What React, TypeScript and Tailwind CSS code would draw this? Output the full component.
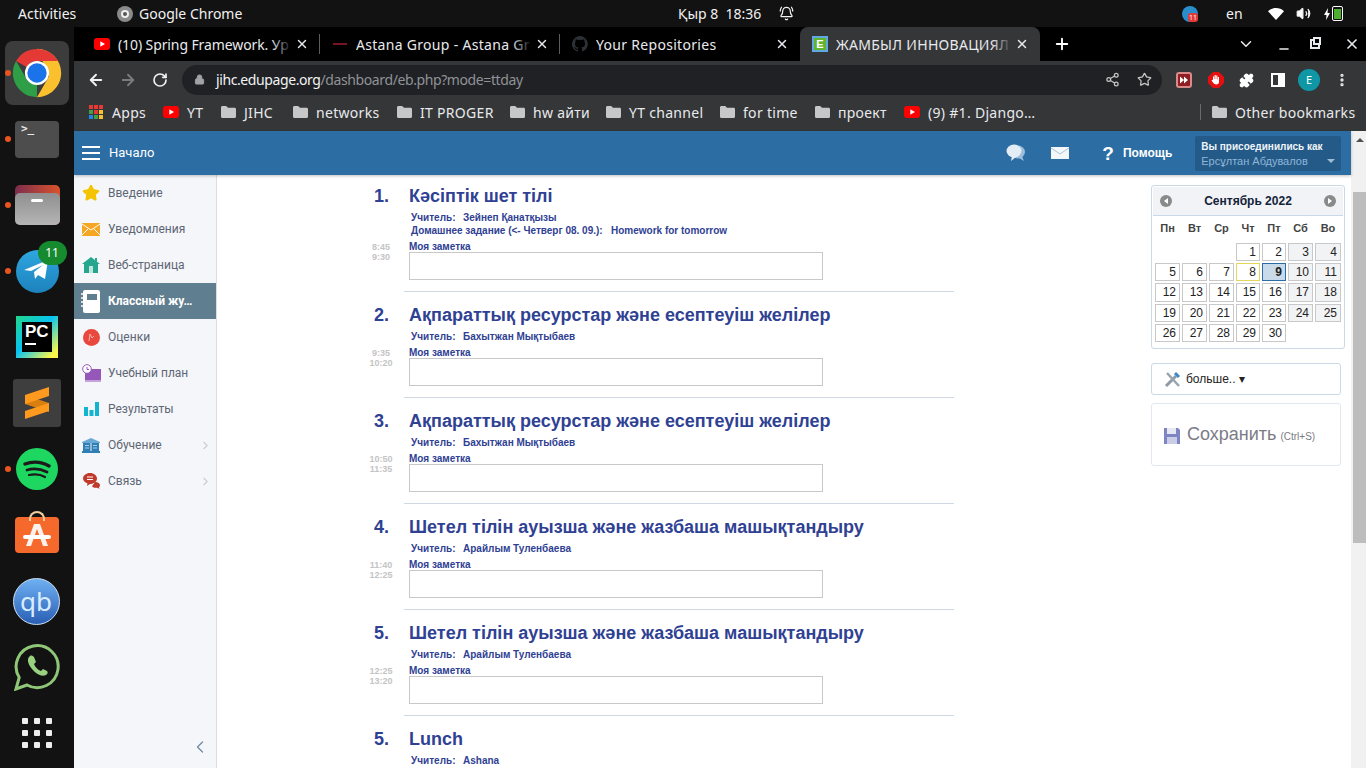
import type { ReactNode } from 'react';
import { ArrowLeft, ArrowRight, ChevronDown, ChevronLeft, ChevronRight, Lock, Plus, RotateCw, Share2, Star, X, Puzzle, MoreVertical, BellRing, Volume2, Minus } from 'lucide-react';

const uiFont = "font-['Noto_Sans',sans-serif]";

type Lesson = { num: string; title: string; teacher: string; start: string; end: string; homework?: boolean; noNote?: boolean };

const lessons: Lesson[] = [
  { num: '1.', title: 'Кәсіптік шет тілі', teacher: 'Зейнеп Қанатқызы', start: '8:45', end: '9:30', homework: true },
  { num: '2.', title: 'Ақпараттық ресурстар және есептеуіш желілер', teacher: 'Бахытжан Мықтыбаев', start: '9:35', end: '10:20' },
  { num: '3.', title: 'Ақпараттық ресурстар және есептеуіш желілер', teacher: 'Бахытжан Мықтыбаев', start: '10:50', end: '11:35' },
  { num: '4.', title: 'Шетел тілін ауызша және жазбаша машықтандыру', teacher: 'Арайлым Туленбаева', start: '11:40', end: '12:25' },
  { num: '5.', title: 'Шетел тілін ауызша және жазбаша машықтандыру', teacher: 'Арайлым Туленбаева', start: '12:25', end: '13:20' },
  { num: '5.', title: 'Lunch', teacher: 'Ashana', start: '', end: '', noNote: true },
];

function YoutubeIcon() {
  return (
    <svg width="16" height="12" viewBox="0 0 16 12">
      <rect width="16" height="12" rx="3" fill="#ff0000" />
      <path d="M6.3 3.2 11 6l-4.7 2.8z" fill="#fff" />
    </svg>
  );
}

function FolderIcon() {
  return (
    <svg width="15" height="12" viewBox="0 0 15 12">
      <path d="M0 1.5C0 .7.6 0 1.4 0h3.8L7 1.8h6.6c.8 0 1.4.6 1.4 1.4v7.3c0 .8-.6 1.5-1.4 1.5H1.4C.6 12 0 11.3 0 10.5z" fill="#c7c7c7" />
    </svg>
  );
}

function ChromeLogo({ size }: { size: number }) {
  return (
    <svg width={size} height={size} viewBox="0 0 48 48">
      <path d="M24 4A20 20 0 0 1 44 24c0 11-9 20-20 20l10-17.3z" fill="#fbc02d" />
      <path d="M24 44A20 20 0 0 1 6.7 14l10 17.3L24 32z" fill="#2e9e47" />
      <path d="M6.700 14A20 20 0 0 1 41.300 14H24a10 10 0 0 0-8.700 5z" fill="#e53935" />
      <circle cx="24" cy="24" r="10" fill="#fff" />
      <circle cx="24" cy="24" r="8" fill="#1a73e8" />
    </svg>
  );
}

function TopBar() {
  return (
    <div className={`flex h-[27px] shrink-0 items-center bg-[#121212] text-[14px] text-[#f1f1f1] ${uiFont}`}>
      <span className="ml-[18px] w-[99px]">Activities</span>
      <span className="flex h-4 w-4 items-center justify-center rounded-full bg-[#8a8a8a]">
        <span className="h-2 w-2 rounded-full border-2 border-[#eeeeee] bg-[#555555]" />
      </span>
      <span className="ml-[6px] w-[539px]">Google Chrome</span>
      <span className="w-[101px]">Қыр 8&nbsp; 18:36</span>
      <BellRing size={15} />
      <span className="ml-[388px] flex h-4 w-4 items-end justify-end rounded-full bg-[#2a8dcc]">
        <span className="rounded-[3px] bg-[#e53935] px-[1px] text-[7px] leading-[9px] text-white">11</span>
      </span>
      <span className="ml-[28px] w-[38px]">en</span>
      <svg className="ml-[4px]" width="16" height="12" viewBox="0 0 16 12">
        <path d="M0 3.2C2.2 1.2 5 0 8 0s5.8 1.2 8 3.2L8 12z" fill="#fff" />
      </svg>
      <Volume2 size={15} className="ml-[12px]" fill="#fff" />
      <svg className="ml-[13px]" width="6" height="12" viewBox="0 0 6 12">
        <path d="M4 0 0 7h2.500L2 12l4-7H3.500z" fill="#fff" />
      </svg>
      <span className="ml-[2px] flex h-[15px] w-[11px] items-end rounded-[2px] border border-white p-[1px]">
        <span className="h-[10px] w-full bg-[#4caf2f]" />
      </span>
    </div>
  );
}

const dockDot = 'absolute left-[5px] top-1/2 h-[6px] w-[6px] -translate-y-1/2 rounded-full bg-[#e9541f]';

function DockItem({ children, dot }: { children: ReactNode; dot?: boolean }) {
  return (
    <div className="relative flex h-[66px] w-[74px] shrink-0 items-center justify-center">
      {dot && <span className={dockDot} />}
      {children}
    </div>
  );
}

function Dock() {
  return (
    <div className="flex w-[74px] shrink-0 flex-col bg-[#121212] pt-[13px]">
      <DockItem dot>
        <div className="flex h-16 w-16 items-center justify-center rounded-[8px] bg-[#3c3c3c]">
          <ChromeLogo size={58} />
        </div>
      </DockItem>
      <DockItem dot>
        <div className="h-[37px] w-[44px] rounded-[4px] bg-[#4d4d4d] pl-[6px] font-['DejaVu_Sans_Mono',monospace] text-[11px] font-bold leading-[16px] text-[#e8e8e8]">&gt;_</div>
      </DockItem>
      <DockItem dot>
        <div className="relative h-[40px] w-[45px] rounded-[5px] bg-[linear-gradient(90deg,#7c2e4e,#d9532c)]">
          <div className="absolute bottom-0 left-0 flex h-[32px] w-full justify-center rounded-[5px] bg-[linear-gradient(#8f8f8f,#b5b5b5)] pt-[6px]">
            <span className="h-[3px] w-[12px] rounded-sm bg-white" />
          </div>
        </div>
      </DockItem>
      <DockItem dot>
        <div className="relative flex h-[43px] w-[43px] items-center justify-center rounded-full bg-[linear-gradient(#2ea6df,#1d82bd)]">
          <svg width="26" height="22" viewBox="0 0 26 22">
            <path d="M0 10 24 0l-3 19-7-4-3 4-1-7 9-7-12 6z" fill="#fff" />
          </svg>
          <span className={`absolute left-[22px] top-[-9px] flex h-[24px] w-[29px] items-center justify-center rounded-full bg-[#168a2e] text-[12px] text-white ${uiFont}`}>11</span>
        </div>
      </DockItem>
      <DockItem>
        <div className="flex h-[42px] w-[42px] items-center justify-center bg-[linear-gradient(135deg,#21d789,#07c3f2_45%,#fcf84a_90%)]">
          <div className="flex h-[30px] w-[30px] flex-col bg-black px-[3px] font-['Liberation_Sans',sans-serif] text-[17px] font-bold leading-[20px] text-white">
            PC
            <span className="mt-[1px] h-[2px] w-[11px] bg-white" />
          </div>
        </div>
      </DockItem>
      <DockItem>
        <div className="flex h-12 w-12 items-center justify-center rounded-[3px] bg-[#3e3e3e]">
          <svg width="24" height="32" viewBox="0 0 24 32">
            <path d="M0 8 24 16v9L0 17z" fill="#d97f10" />
            <path d="M24 0v9L0 17V8zM24 16v8L0 32v-8z" fill="#ff9a1f" />
          </svg>
        </div>
      </DockItem>
      <DockItem dot>
        <div className="flex h-[42px] w-[42px] items-center justify-center rounded-full bg-[#1ed760]">
          <svg width="28" height="22" viewBox="0 0 28 22" fill="none" stroke="#1b1b1b" strokeLinecap="round">
            <path d="M2 6c8-3 17-2 24 2" strokeWidth="3.4" />
            <path d="M4 12c7-2 14-1 20 2" strokeWidth="2.8" />
            <path d="M6 17c5-1 11-1 16 2" strokeWidth="2.2" />
          </svg>
        </div>
      </DockItem>
      <DockItem>
        <div className="relative flex h-[36px] w-[44px] items-center justify-center rounded-[4px] bg-[#f6692c]">
          <span className="absolute left-[14px] top-[-6px] h-[10px] w-[16px] rounded-t-full border-2 border-b-0 border-[#f3cf9d]" />
          <svg width="30" height="24" viewBox="0 0 30 24">
            <path d="M12 1h6l8 22h-5L15 6 9 23H4z" fill="#fff" opacity=".9" />
            <rect y="12" width="28" height="4" rx="2" x="1" fill="#fff" />
          </svg>
        </div>
      </DockItem>
      <DockItem>
        <div className="mr-[2px] flex h-[47px] w-[47px] items-center justify-center rounded-full border border-[#cfe2f6] bg-[linear-gradient(#6fb0f2,#2a5fb5)] font-['Noto_Sans',sans-serif] text-[26px] leading-none text-[#d8ecff]">qb</div>
      </DockItem>
      <DockItem>
        <svg width="48" height="48" viewBox="0 0 48 48">
          <path d="M3 46l3.2-11.5A21 21 0 1 1 14 42z" fill="none" stroke="#8fc776" strokeWidth="3" />
          <path d="M17 13c-3 2-3 7 2 13s10 8 14 6c2-1 2-3 1-4l-4-2-2 2c-3-1-6-4-7-7l2-2-2-5c-1-1-3-2-4-1z" fill="#9ad181" />
        </svg>
      </DockItem>
      <DockItem>
        <div className="grid grid-cols-3 gap-[6px]">
          {Array.from({ length: 9 }).map((_, i) => (
            <span key={i} className="h-[6px] w-[6px] rounded-[1px] bg-[#eeeeee]" />
          ))}
        </div>
      </DockItem>
    </div>
  );
}

function Tab({ icon, title, active, divider, first }: { icon: ReactNode; title: string; active?: boolean; divider?: boolean; first?: boolean }) {
  return (
    <div className={`relative flex h-[34px] w-[240px] shrink-0 items-center pr-[9px] ${first ? 'pl-[14px]' : 'pl-[12px]'} ${active ? 'rounded-t-[8px] bg-[#353638]' : ''}`}>
      <span className="flex w-[16px] items-center justify-center">{icon}</span>
      <span className={`relative ml-[8px] overflow-hidden whitespace-nowrap text-[14px] text-[#e8eaed] ${first ? 'w-[174px] tracking-[-0.1px]' : 'w-[176px] tracking-[0.3px]'}`}>
        {title}
        <span className={`absolute inset-y-0 right-0 w-[20px] bg-gradient-to-r from-transparent ${active ? 'to-[#353638]' : 'to-black'}`} />
      </span>
      <X size={14} strokeWidth={2.5} className="ml-[3px] text-[#e8eaed]" />
      {divider && <span className="absolute right-0 top-[7px] h-[20px] w-px bg-[#5c5c5c]" />}
    </div>
  );
}

function TabStrip() {
  return (
    <div className={`flex h-[34px] shrink-0 items-center bg-black pl-[6px] ${uiFont}`}>
      <Tab first icon={<YoutubeIcon />} title="(10) Spring Framework. Ур" divider />
      <Tab icon={<span className="h-[2px] w-[14px] bg-[#7a1420]" />} title="Astana Group - Astana Gr" divider />
      <Tab
        icon={
          <svg width="16" height="16" viewBox="0 0 16 16">
            <path d="M8 0a8 8 0 0 0-2.5 15.6c.4 0 .5-.2.5-.4v-1.4c-2.2.5-2.7-1-2.7-1-.4-.9-.9-1.200-.9-1.200-.7-.5.100-.5.100-.5.800.100 1.200.8 1.200.8.700 1.200 1.900.9 2.300.7.100-.5.300-.9.500-1.100-1.800-.2-3.600-.9-3.600-4 0-.9.300-1.600.8-2.100-.1-.2-.4-1 .1-2.100 0 0 .7-.2 2.200.8a7.500 7.500 0 0 1 4 0c1.500-1 2.200-.8 2.200-.8.400 1.100.200 1.900.100 2.100.5.600.8 1.300.8 2.100 0 3.100-1.900 3.700-3.700 3.900.3.300.6.800.6 1.500v2.200c0 .2.100.5.600.4A8 8 0 0 0 8 0z" fill="#2d3136" />
          </svg>
        }
        title="Your Repositories"
      />
      <Tab
        active
        icon={
          <span className="flex h-4 w-4 items-center justify-center border-2 border-[#5fa8e0] bg-[#63b32e] font-['Liberation_Sans',sans-serif] text-[11px] font-bold leading-none text-white">E</span>
        }
        title="ЖАМБЫЛ ИННОВАЦИЯЛ"
      />
      <Plus size={18} strokeWidth={2.5} className="ml-[13px] text-white" />
      <ChevronDown size={18} className="ml-[166px] text-[#e8eaed]" />
      <Minus size={14} strokeWidth={2.5} className="ml-[22px] mt-[9px] text-[#e8eaed]" />
      <span className="relative ml-[19px] h-[10px] w-[10px] border-2 border-[#e8eaed]">
        <span className="absolute left-[1px] top-[-4px] h-[8px] w-[8px] border-2 border-[#e8eaed] bg-black" />
      </span>
      <X size={16} strokeWidth={2.5} className="ml-[24px] text-[#e8eaed]" />
    </div>
  );
}

function Toolbar() {
  return (
    <div className="flex h-[34px] shrink-0 items-center bg-[#353638] pl-[13px] pt-[4px]">
      <ArrowLeft size={18} strokeWidth={2.5} className="text-[#f1f1f1]" />
      <ArrowRight size={18} strokeWidth={2.5} className="ml-[14px] text-[#7a7b7d]" />
      <RotateCw size={16} strokeWidth={2.5} className="ml-[15px] text-[#f1f1f1]" />
      <div className={`ml-[14px] flex h-[30px] w-[980px] items-center rounded-full bg-[#202124] pb-[1px] pl-[12px] text-[14px] tracking-[-0.4px] ${uiFont}`}>
        <Lock size={11} className="text-[#a0a2a6]" fill="#a0a2a6" />
        <span className="ml-[11px] text-[#f1f3f4]">jihc.edupage.org</span>
        <span className="text-[#8f9297]">/dashboard/eb.php?mode=ttday</span>
        <Share2 size={15} className="ml-auto text-[#c4c7c5]" />
        <Star size={15} className="ml-[17px] mr-[10px] text-[#c4c7c5]" />
      </div>
      <svg className="ml-[14px]" width="16" height="16" viewBox="0 0 16 16">
        <rect x="1" y="1" width="14" height="14" rx="2" fill="#8f1d22" stroke="#d98a8a" strokeWidth="2" />
        <path d="M4 4.500 8 8l-4 3.500zM8 4.500 12 8l-4 3.500z" fill="#fff" />
      </svg>
      <svg className="ml-[16px]" width="16" height="16" viewBox="0 0 16 16">
        <path d="M5 0h6l5 5v6l-5 5H5l-5-5V5z" fill="#e60f0f" />
        <path d="M5 8V4.500h1.200V7h.4V3h1.200v4h.4V3.500h1.200V7.500h.4V5h1.200v5c0 1.500-1 2.500-2.500 2.500S5.500 11.500 5 10.500L3.500 8.500l1-.7z" fill="#fff" />
      </svg>
      <Puzzle size={15} className="ml-[15px] text-white" fill="#fff" />
      <span className="ml-[17px] h-[14px] w-[14px] border-2 border-r-[7px] border-white" />
      <span className={`ml-[13px] flex h-[22px] w-[22px] items-center justify-center rounded-full bg-[#0f97a6] text-[11px] text-white ${uiFont}`}>E</span>
      <MoreVertical size={16} strokeWidth={3} className="ml-[14px] text-[#e8eaed]" />
    </div>
  );
}

function Bookmark({ width, icon, label }: { width: string; icon: ReactNode; label: string }) {
  return (
    <div className={`flex shrink-0 items-center gap-[8px] ${width}`}>
      {icon}
      <span className="whitespace-nowrap">{label}</span>
    </div>
  );
}

function BookmarksBar() {
  return (
    <div className={`flex h-[36px] shrink-0 items-center bg-[#353638] pb-[2px] pl-[15px] text-[14px] tracking-[0.3px] text-[#e8eaed] ${uiFont}`}>
      <div className="flex w-[74px] shrink-0 items-center gap-[9px]">
        <div className="grid h-[14px] w-[14px] grid-cols-3 gap-[1px]">
          {['#e53935', '#e53935', '#e53935', '#43a047', '#e53935', '#fbc02d', '#1e88e5', '#43a047', '#fbc02d'].map((c, i) => (
            <svg key={i} width="4" height="4"><rect width="4" height="4" fill={c} /></svg>
          ))}
        </div>
        <span>Apps</span>
      </div>
      <Bookmark width="w-[58px]" icon={<YoutubeIcon />} label="YT" />
      <Bookmark width="w-[72px]" icon={<FolderIcon />} label="JIHC" />
      <Bookmark width="w-[104px]" icon={<FolderIcon />} label="networks" />
      <Bookmark width="w-[113px]" icon={<FolderIcon />} label="IT PROGER" />
      <Bookmark width="w-[96px]" icon={<FolderIcon />} label="hw айти" />
      <Bookmark width="w-[114px]" icon={<FolderIcon />} label="YT channel" />
      <Bookmark width="w-[95px]" icon={<FolderIcon />} label="for time" />
      <Bookmark width="w-[89px]" icon={<FolderIcon />} label="проект" />
      <Bookmark width="w-[296px]" icon={<YoutubeIcon />} label="(9) #1. Django…" />
      <span className="mr-[11px] h-[16px] w-px bg-[#6a6a6a]" />
      <Bookmark width="w-[150px]" icon={<FolderIcon />} label="Other bookmarks" />
    </div>
  );
}

function PageHeader() {
  return (
    <div className="relative z-10 flex h-[44px] shrink-0 items-center bg-[#2c6da4] pl-[8px] pr-[10px] text-white shadow-[0_1px_3px_rgba(0,0,0,0.25)]">
      <div className="flex w-[18px] flex-col gap-[4px]">
        <span className="h-[2px] bg-white" />
        <span className="h-[2px] bg-white" />
        <span className="h-[2px] bg-white" />
      </div>
      <span className="ml-[9px] font-['Roboto',sans-serif] text-[13px]">Начало</span>
      <svg className="ml-[852px]" width="20" height="18" viewBox="0 0 20 18">
        <ellipse cx="12" cy="8" rx="7" ry="6.500" fill="#9dbfdc" />
        <path d="M16 12l2 5-5-3z" fill="#9dbfdc" />
        <ellipse cx="8" cy="7" rx="7.500" ry="6.500" fill="#e3edf5" />
        <path d="M6 12l-1 5 5-4z" fill="#e3edf5" />
      </svg>
      <svg className="ml-[25px]" width="18" height="12" viewBox="0 0 18 12">
        <rect width="18" height="12" fill="#f4f7fa" />
        <path d="M0 1l9 6 9-6" fill="none" stroke="#a9c2d8" />
      </svg>
      <span className="ml-[33px] font-['Liberation_Sans',sans-serif] text-[19px] font-bold leading-none">?</span>
      <span className="ml-[9px] font-['Liberation_Sans',sans-serif] text-[12px] font-bold">Помощь</span>
      <div className="relative ml-[23px] h-[35px] w-[146px] rounded-[2px] bg-[#245a87] pl-[6px] pt-[4px] font-['Liberation_Sans',sans-serif]">
        <div className="text-[10px] font-bold leading-[13px] text-[#eef4f9]">Вы присоединились как</div>
        <div className="mt-[1px] text-[11px] leading-[14px] text-[#8fb6d9]">Ерсұлтан Абдувалов</div>
        <span className="absolute bottom-[8px] right-[6px] h-0 w-0 border-x-[4px] border-t-[4px] border-x-transparent border-t-[#9dbcd6]" />
      </div>
    </div>
  );
}

function MenuItem({ icon, label, active, more }: { icon: ReactNode; label: string; active?: boolean; more?: boolean }) {
  return (
    <div className={`flex h-[36px] items-center font-['Roboto',sans-serif] text-[12px] ${active ? 'bg-[#5f7e8f] font-bold text-white' : 'text-[#5d6675]'}`}>
      <span className="flex w-[34px] shrink-0 justify-center">{icon}</span>
      <span className="whitespace-nowrap">{label}</span>
      {more && <ChevronRight size={13} className="ml-auto mr-[4px] text-[#c9ccd2]" />}
    </div>
  );
}

function Sidebar() {
  return (
    <div className="flex w-[143px] shrink-0 flex-col border-r border-[#dcdcdc] bg-[#f5f6f9]">
      <MenuItem icon={<Star size={18} fill="#f4c400" stroke="#f4c400" />} label="Введение" />
      <MenuItem
        icon={
          <svg width="18" height="13" viewBox="0 0 18 13">
            <rect width="18" height="13" fill="#f5a623" />
            <path d="M0 1l9 6 9-6M0 12l6-6M18 12l-6-6" fill="none" stroke="#fff" />
          </svg>
        }
        label="Уведомления"
      />
      <MenuItem
        icon={
          <svg width="18" height="16" viewBox="0 0 18 16">
            <path d="M13 1h2v4l-2-1.500z" fill="#26a68f" />
            <path d="M9 0l9 7h-2v9H2V7H0z" fill="#26a68f" />
            <rect x="7" y="9" width="4" height="7" fill="#bfe6dd" />
          </svg>
        }
        label="Веб-страница"
      />
      <MenuItem
        active
        icon={
          <svg width="20" height="23" viewBox="0 0 20 23">
            <rect x="2" width="17" height="23" rx="2" fill="#fff" />
            <rect x="6" y="4" width="10" height="6" fill="#5f7e8f" />
            <path d="M0 4h4M0 8h4M0 12h4M0 16h4" stroke="#fff" strokeWidth="1.500" />
          </svg>
        }
        label="Классный жу…"
      />
      <MenuItem
        icon={
          <svg width="17" height="17" viewBox="0 0 17 17">
            <circle cx="8.500" cy="8.500" r="8.500" fill="#e8483e" />
            <path d="M6 12l1-7 2 4 2-2" fill="none" stroke="#f6b0aa" />
          </svg>
        }
        label="Оценки"
      />
      <MenuItem
        icon={
          <svg width="19" height="19" viewBox="0 0 19 19">
            <rect x="3" y="5" width="16" height="11" fill="#9658b8" />
            <rect x="3" y="16" width="16" height="2" fill="#c7a3dc" />
            <circle cx="5" cy="5" r="4.300" fill="#fff" stroke="#9658b8" />
            <path d="M5 3v2.500h2" fill="none" stroke="#9658b8" />
          </svg>
        }
        label="Учебный план"
      />
      <MenuItem
        icon={
          <svg width="15" height="14" viewBox="0 0 15 14">
            <rect y="5" width="4" height="9" fill="#12b5d0" />
            <rect x="5.500" y="8" width="4" height="6" fill="#12b5d0" />
            <rect x="11" width="4" height="14" fill="#12b5d0" />
          </svg>
        }
        label="Результаты"
      />
      <MenuItem
        more
        icon={
          <svg width="18" height="15" viewBox="0 0 18 15">
            <path d="M9 0l9 4v1H0V4z" fill="#6aa9d6" />
            <path d="M1 5h7.500v8H1zM9.500 5H17v8H9.500z" fill="#2f7fb5" />
            <path d="M3 7.500h4M3 10h4M11 7.500h4M11 10h4" stroke="#a9d0ea" />
            <rect y="13" width="18" height="2" fill="#2f7fb5" />
          </svg>
        }
        label="Обучение"
      />
      <MenuItem
        more
        icon={
          <svg width="17" height="16" viewBox="0 0 17 16">
            <path d="M7 0c4 0 7 2.500 7 5.500S11 11 7 11l-3 2 .5-2.600C2 9.500 0 7.800 0 5.500 0 2.500 3 0 7 0z" fill="#c0392b" />
            <path d="M12 9c3 0 5 1.500 5 3.200 0 1-.5 1.500-1 2l.5 1.500-2.500-1c-1 .2-4 .3-5-1.500z" fill="#c0392b" />
            <path d="M4 4h6M4 6.500h6" stroke="#fff" />
          </svg>
        }
        label="Связь"
      />
      <ChevronLeft size={20} strokeWidth={1.5} className="ml-[116px] mt-auto mb-[11px] text-[#6d8ba8]" />
    </div>
  );
}

function LessonRow({ lesson, first }: { lesson: Lesson; first: boolean }) {
  return (
    <div className="flex">
      <div className="flex w-[44px] shrink-0 flex-col">
        <div className={`${first ? 'pt-[9px]' : 'pt-[11px]'} pl-[14px] text-[18px] font-bold leading-[24px] text-[#2f4193]`}>{lesson.num}</div>
        {lesson.start && (
          <div className="mt-auto w-[33px] pb-[30px] pl-[9px] text-center text-[9px] font-bold leading-[10px] text-[#c4c4c4]">
            <div>{lesson.start}</div>
            <div>{lesson.end}</div>
          </div>
        )}
      </div>
      <div className={`w-[550px] pl-[5px] ${first ? 'pt-[9px]' : 'pt-[11px]'} ${lesson.noNote ? '' : 'border-b border-[#cfd8e3] pb-[11px]'}`}>
        <div className="whitespace-nowrap text-[18px] font-bold leading-[24px] text-[#2f4193]">{lesson.title}</div>
        <div className="mt-[3px] flex h-[13px] pl-[2px] text-[10px] font-bold leading-[13px] text-[#2f4193]">
          <span className="w-[52px]">Учитель:</span>
          <span>{lesson.teacher}</span>
        </div>
        {lesson.homework && (
          <div className="flex h-[13px] pl-[2px] text-[10px] font-bold leading-[13px] text-[#2f4193]">
            <span className="w-[200px] whitespace-nowrap">Домашнее задание (&lt;- Четверг 08. 09.):</span>
            <span>Homework for tomorrow</span>
          </div>
        )}
        {!lesson.noNote && (
          <>
            <div className="mt-[4px] h-[11px] text-[10px] font-bold leading-[12px] text-[#2f4193]">Моя заметка</div>
            <div className="h-[28px] w-[414px] border border-[#c8c8c8] bg-white" />
          </>
        )}
      </div>
    </div>
  );
}

const days: { d: number; cls: string }[] = Array.from({ length: 30 }, (_, i) => {
  const d = i + 1;
  const weekend = [3, 4, 10, 11, 17, 18, 24, 25].includes(d);
  let cls = 'border-[#c8c8c8] bg-white';
  if (weekend) cls = 'border-[#c8c8c8] bg-[#f2f3f5]';
  if (d === 8) cls = 'border-[#e3d65a] bg-white';
  if (d === 9) cls = 'border-[#2c6da4] bg-[#c9daea] font-bold';
  return { d, cls };
});

function Calendar() {
  return (
    <div className="w-[194px] rounded-[3px] border border-[#c9d9e8] p-[1px] font-['Liberation_Sans',sans-serif]">
      <div className="flex h-[29px] items-center justify-between border-b border-[#c9d9e8] bg-[#f2f3f6] px-[7px]">
        <span className="flex h-[12px] w-[12px] items-center justify-center rounded-full bg-[#8a8a8a]">
          <span className="h-0 w-0 border-y-[3px] border-r-[4px] border-y-transparent border-r-white" />
        </span>
        <span className="text-[12px] font-bold text-[#14233a]">Сентябрь 2022</span>
        <span className="flex h-[12px] w-[12px] items-center justify-center rounded-full bg-[#8a8a8a]">
          <span className="h-0 w-0 border-y-[3px] border-l-[4px] border-y-transparent border-l-white" />
        </span>
      </div>
      <div className="grid grid-cols-[25px_25px_25px_24px_24px_25px_26px] gap-x-[2px] pl-[2px] pt-[5px] text-center text-[11px] font-bold leading-[14px] text-[#444444]">
        {['Пн', 'Вт', 'Ср', 'Чт', 'Пт', 'Сб', 'Во'].map((w) => (
          <span key={w}>{w}</span>
        ))}
      </div>
      <div className="mt-[8px] grid grid-cols-[25px_25px_25px_24px_24px_25px_26px] grid-rows-[18px_18px_19px_18px_18px] gap-[2px] pb-[5px] pl-[2px] text-[12px] leading-[16px] text-[#222222]">
        <span className="col-span-3" />
        {days.map(({ d, cls }) => (
          <span key={d} className={`border pr-[3px] text-right ${cls}`}>
            {d}
          </span>
        ))}
      </div>
    </div>
  );
}

function RightColumn() {
  return (
    <div className="flex flex-col pt-[10px] font-['Liberation_Sans',sans-serif]">
      <Calendar />
      <div className="mt-[14px] flex h-[32px] w-[190px] items-center rounded-[3px] border border-[#c9d9e8] pl-[12px] text-[12px] text-[#222222]">
        <svg width="17" height="17" viewBox="0 0 17 17" fill="none">
          <path d="M2 15 12 5" stroke="#8f9aa5" strokeWidth="3" />
          <path d="M11 2l4 4" stroke="#3f86c6" strokeWidth="3" />
          <path d="M3 2l12 13" stroke="#9aa4ad" strokeWidth="2.500" />
        </svg>
        <span className="ml-[5px]">больше.. ▾</span>
      </div>
      <div className="mt-[8px] flex h-[63px] w-[190px] items-center rounded-[3px] border border-[#e2e8ef] pl-[12px] text-[#7b7b86]">
        <svg width="16" height="16" viewBox="0 0 16 16" className="mt-[2px]">
          <path d="M0 0h14l2 2v14H0z" fill="#7d85c2" />
          <rect x="3" width="9" height="6" fill="#e6e8f3" />
          <rect x="3" y="9" width="10" height="7" fill="#c9cde6" />
        </svg>
        <span className="ml-[7px] text-[18px]">Сохранить</span>
        <span className="ml-[4px] mt-[3px] text-[10px]">(Ctrl+S)</span>
      </div>
    </div>
  );
}

export default function App() {
  return (
    <div className="flex h-[768px] w-[1366px] flex-col overflow-hidden bg-[#121212]">
      <TopBar />
      <div className="flex min-h-0 flex-1">
        <Dock />
        <div className="flex min-w-0 flex-1 flex-col">
          <TabStrip />
          <Toolbar />
          <BookmarksBar />
          <div className="flex min-h-0 flex-1 bg-white">
            <div className="flex min-w-0 flex-1 flex-col">
              <PageHeader />
              <div className="flex min-h-0 flex-1">
                <Sidebar />
                <div className="w-[143px] shrink-0" />
                <div className="flex w-[791px] shrink-0 flex-col font-['Liberation_Sans',sans-serif]">
                  {lessons.map((l, i) => (
                    <LessonRow key={i} lesson={l} first={i === 0} />
                  ))}
                </div>
                <RightColumn />
              </div>
            </div>
            <div className="w-[15px] shrink-0 bg-[#f1f1f1]">
              <div className="flex h-[17px] items-center justify-center pl-[2px]">
                <span className="h-0 w-0 border-x-[4px] border-b-[4px] border-x-transparent border-b-[#505050]" />
              </div>
              <div className="mt-[44px] ml-[2px] h-[351px] w-[13px] bg-[#bdbdbd]" />
            </div>
          </div>
        </div>
      </div>
    </div>
  );
}
